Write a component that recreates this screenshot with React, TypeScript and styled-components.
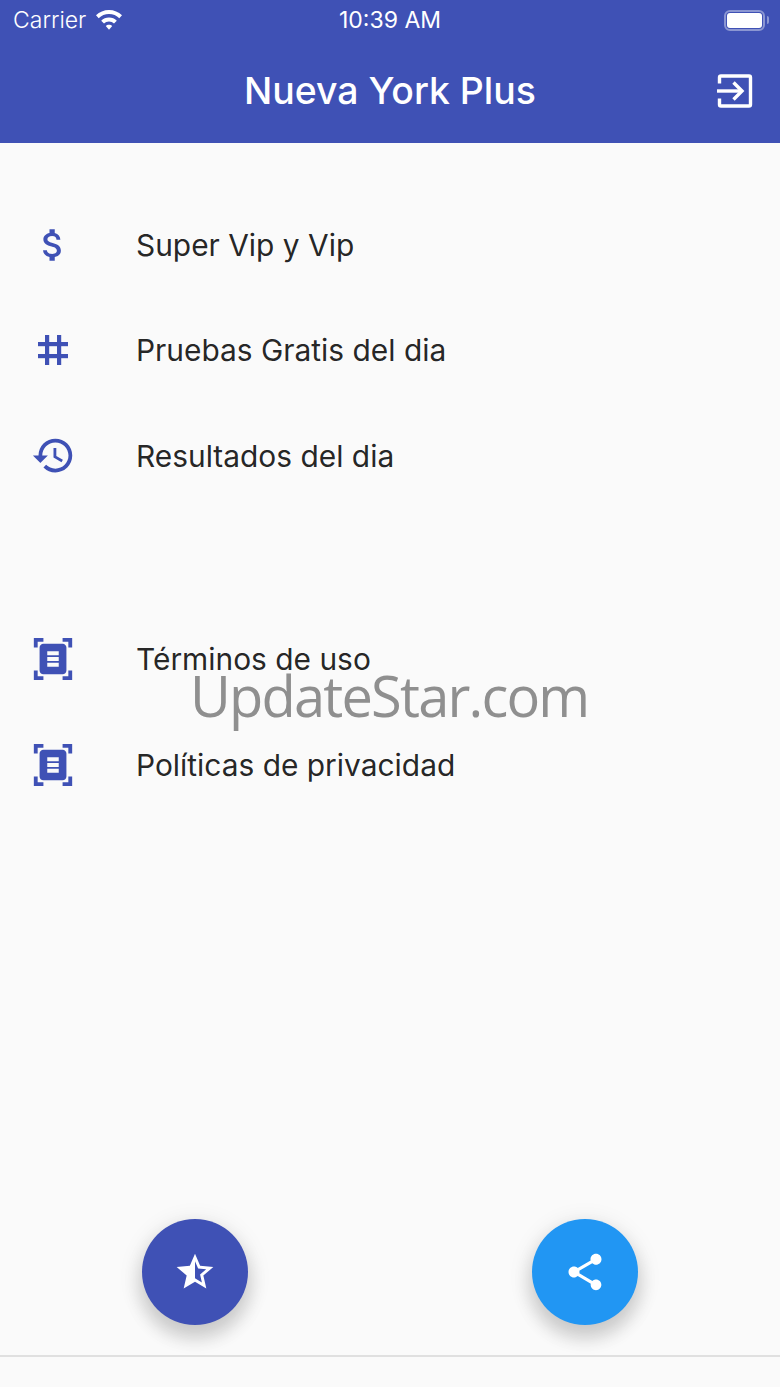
import styled, { createGlobalStyle } from 'styled-components';
import { MdAttachMoney, MdHistory, MdDocumentScanner, MdStarHalf, MdShare } from 'react-icons/md';

const GlobalStyle = createGlobalStyle`
  html, body {
    margin: 0;
    padding: 0;
    background: #fafafa;
  }
`;

function WifiIcon() {
  return (
    <svg width="28" height="22" viewBox="0 0 28 22" fill="#fff">
      <path d="M14 1C9 1 4.400 3 1 6.300l2.700 2.900C6.400 6.500 10 5 14 5s7.600 1.500 10.300 4.200L27 6.300C23.600 3 19 1 14 1z" />
      <path d="M14 8.500c-3 0-5.700 1.200-7.800 3.200l2.800 2.900c1.300-1.300 3-2.100 5-2.100s3.700.8 5 2.100l2.800-2.900C19.700 9.700 17 8.500 14 8.500z" />
      <path d="M14 15.800c-1.300 0-2.400.5-3.200 1.300l3.200 3.600 3.200-3.600c-.8-.8-1.900-1.300-3.200-1.300z" />
    </svg>
  );
}

function HashIcon() {
  return (
    <svg width="32" height="32" viewBox="0 0 32 32" fill="#3f51b5">
      <rect x="8" y="1" width="4.2" height="30" />
      <rect x="20" y="1" width="4.2" height="30" />
      <rect x="1" y="8" width="30" height="4.2" />
      <rect x="1" y="20" width="30" height="4.2" />
    </svg>
  );
}

function LoginIcon() {
  return (
    <svg width="36" height="36" viewBox="0 0 36 36" fill="none" stroke="#fff" strokeWidth="3.4">
      <path d="M2.500 10.500V4.500a1.500 1.500 0 0 1 1.500-1.500h28a1.500 1.500 0 0 1 1.500 1.500v27a1.500 1.500 0 0 1-1.500 1.500H4a1.500 1.500 0 0 1-1.500-1.500V25.500" />
      <path d="M0 18h25" />
      <path d="M16.500 9.500l8.500 8.500-8.500 8.500" />
    </svg>
  );
}

const topItems = [
  { icon: <MdAttachMoney size={42} />, label: 'Super Vip y Vip' },
  { icon: <HashIcon />, label: 'Pruebas Gratis del dia' },
  { icon: <MdHistory size={45} />, label: 'Resultados del dia' },
];

const bottomItems = [
  { icon: <MdDocumentScanner size={46} />, label: 'Términos de uso' },
  { icon: <MdDocumentScanner size={46} />, label: 'Políticas de privacidad' },
];

export default function App() {
  return (
    <Page>
      <GlobalStyle />
      <StatusBar>
        <Carrier>
          Carrier
          <WifiIcon />
        </Carrier>
        <Clock>10:39 AM</Clock>
        <Battery>
          <BatteryFill />
          <BatteryCap />
        </Battery>
      </StatusBar>
      <AppBar>
        <Title>Nueva York Plus</Title>
        <LogoutButton>
          <LoginIcon />
        </LogoutButton>
      </AppBar>
      <Content>
        <Group>
          {topItems.map((item) => (
            <Row key={item.label}>
              <IconSlot>{item.icon}</IconSlot>
              <Label>{item.label}</Label>
            </Row>
          ))}
        </Group>
        <Group>
          {bottomItems.map((item) => (
            <Row key={item.label}>
              <IconSlot>{item.icon}</IconSlot>
              <Label>{item.label}</Label>
            </Row>
          ))}
        </Group>
        <Watermark>UpdateStar.com</Watermark>
      </Content>
      <Actions>
        <Fab color="#3f51b5">
          <MdStarHalf size={44} />
        </Fab>
        <Fab color="#2196f3">
          <MdShare size={44} />
        </Fab>
      </Actions>
      <BottomBar />
    </Page>
  );
}

const Page = styled.div`
  width: 780px;
  height: 1387px;
  display: flex;
  flex-direction: column;
  background: #fafafa;
  font-family: Inter, Roboto, 'Liberation Sans', sans-serif;
  overflow: hidden;
`;

const StatusBar = styled.div`
  height: 40px;
  display: grid;
  grid-template-columns: 1fr auto 1fr;
  align-items: center;
  padding: 0 15px;
  background: #3f51b5;
  color: #fff;
  font-size: 23px;
`;

const Carrier = styled.div`
  margin-left: -2px;
  display: flex;
  align-items: center;
  gap: 9px;
  font-weight: 300;
`;

const Clock = styled.div`
  font-weight: 400;
`;

const Battery = styled.div`
  justify-self: end;
  position: relative;
  width: 41px;
  height: 21px;
  box-sizing: border-box;
  border: 2px solid rgba(255, 255, 255, 0.4);
  border-radius: 6px;
  padding: 1px;
`;

const BatteryFill = styled.div`
  height: 100%;
  background: #fff;
  border-radius: 3px;
`;

const BatteryCap = styled.div`
  position: absolute;
  right: -6px;
  top: 4px;
  width: 2px;
  height: 8px;
  background: rgba(255, 255, 255, 0.4);
  border-radius: 0 2px 2px 0;
`;

const AppBar = styled.div`
  position: relative;
  height: 103px;
  box-sizing: border-box;
  padding-bottom: 3px;
  display: flex;
  align-items: center;
  justify-content: center;
  background: #3f51b5;
  color: #fff;
`;

const Title = styled.div`
  font-size: 37.4px;
  font-weight: 500;
`;

const LogoutButton = styled.div`
  position: absolute;
  right: 27px;
  top: 33px;
  display: flex;
`;

const Content = styled.div`
  position: relative;
  flex: 1;
  display: flex;
  flex-direction: column;
  gap: 98px;
  padding-top: 49px;
`;

const Group = styled.div`
  display: flex;
  flex-direction: column;
`;

const Row = styled.div`
  height: 105.5px;
  display: flex;
  align-items: center;
`;

const IconSlot = styled.div`
  width: 105px;
  padding-left: 1px;
  box-sizing: border-box;
  flex: none;
  display: flex;
  justify-content: center;
  color: #3f51b5;
`;

const Label = styled.div`
  margin-left: 31px;
  font-size: 29.9px;
  color: rgba(0, 0, 0, 0.87);
`;

const Watermark = styled.div`
  position: absolute;
  left: 190px;
  top: 514px;
  font-family: 'Open Sans', sans-serif;
  font-size: 56px;
  font-weight: 400;
  letter-spacing: -1.8px;
  color: #8f8f8f;
  white-space: nowrap;
`;

const Actions = styled.div`
  display: flex;
  justify-content: space-around;
  margin-bottom: 30px;
`;

const Fab = styled.div<{ color: string }>`
  width: 106px;
  height: 106px;
  border-radius: 50%;
  display: flex;
  align-items: center;
  justify-content: center;
  color: #fff;
  background: ${(p) => p.color};
  box-shadow: 0 12px 17px 2px rgba(0, 0, 0, 0.14), 0 5px 22px 4px rgba(0, 0, 0, 0.08);
`;

const BottomBar = styled.div`
  height: 32px;
  box-sizing: border-box;
  border-top: 2px solid #e0e0e0;
  background: #fafafa;
`;
